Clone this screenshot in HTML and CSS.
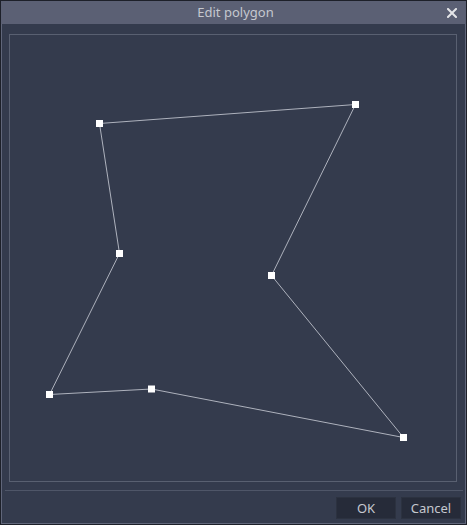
FILE: index.html
```html
<!DOCTYPE html>
<html>
<head>
<meta charset="utf-8">
<link rel="stylesheet" href="styles.css">
</head>
<body>
<div class="window">
  <div class="titlebar">
    <span class="title">Edit polygon</span>
    <svg class="close" width="10" height="10" viewBox="0 0 10 10"><path d="M1 1L9 9M9 1L1 9" stroke="#e4e5e8" stroke-width="2" stroke-linecap="square"/></svg>
  </div>
  <div class="content">
    <div class="panel">
      <svg class="canvas" width="446" height="446" viewBox="10 35 446 446">
        <polygon points="99.5,123.5 355.5,104.5 271.5,275.5 403.5,437.5 151.5,389 49.5,394.5 119.5,253.5" fill="none" stroke="#aeb2bd" stroke-width="1"/>
        <g fill="#ffffff">
          <rect x="96" y="120" width="7" height="7"/>
          <rect x="352" y="101" width="7" height="7"/>
          <rect x="268" y="272" width="7" height="7"/>
          <rect x="400" y="434" width="7" height="7"/>
          <rect x="148" y="385.5" width="7" height="7"/>
          <rect x="46" y="391" width="7" height="7"/>
          <rect x="116" y="250" width="7" height="7"/>
        </g>
      </svg>
    </div>
    <div class="separator"></div>
    <div class="buttons">
      <button class="btn">OK</button>
      <button class="btn">Cancel</button>
    </div>
  </div>
</div>
</body>
</html>
```

FILE: styles.css
```css
html, body {
  margin: 0;
  padding: 0;
  background: #1d2029;
  width: 467px;
  height: 525px;
  overflow: hidden;
}

.window {
  margin: 1px 0 0 1px;
  width: 465px;
  height: 523px;
  display: flex;
  flex-direction: column;
  font-family: "Noto Sans", "DejaVu Sans", sans-serif;
}

.titlebar {
  height: 23px;
  flex: none;
  background: #5b6074;
  display: flex;
  align-items: center;
  justify-content: center;
  position: relative;
}

.title {
  color: #c5c8cf;
  font-size: 13px;
  line-height: 23px;
  margin-left: 4px;
}

.close {
  position: absolute;
  right: 9px;
  top: 7px;
}

.content {
  flex: 1;
  background: #343b4d;
  border: 1px solid #60667a;
  border-top: none;
  display: flex;
  flex-direction: column;
  padding: 10px 0 0 7px;
}

.panel {
  width: 446px;
  height: 446px;
  border: 1px solid #596071;
  flex: none;
}

.canvas {
  display: block;
}

.separator {
  height: 1px;
  background: #4f5668;
  margin: 8px 2px 0 -4px;
}

.buttons {
  display: flex;
  justify-content: flex-end;
  gap: 5px;
  margin-top: 6px;
  padding-right: 4px;
}

.btn {
  width: 60px;
  height: 22px;
  background: #262b39;
  border: 1px solid #2c3240;
  color: #c5c8cf;
  font-family: "Noto Sans", "DejaVu Sans", sans-serif;
  font-size: 13px;
  padding: 0;
  line-height: 20px;
}
```
